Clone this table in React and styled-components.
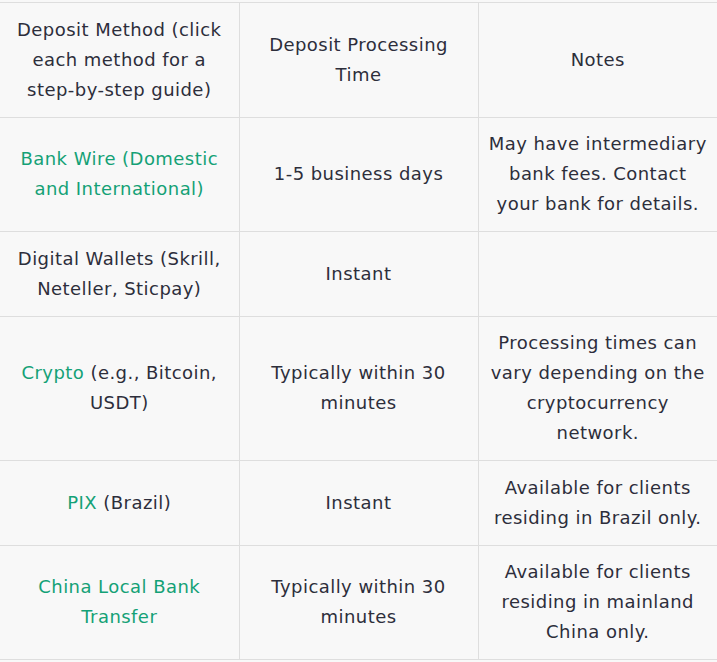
import React from 'react';
import styled, { createGlobalStyle } from 'styled-components';

const GlobalStyle = createGlobalStyle`
  html, body {
    margin: 0;
    padding: 0;
    background: #f8f8f8;
  }
`;

const Wrapper = styled.div`
  padding-top: 2px;
  width: 717px;
  background: #f8f8f8;
`;

const Table = styled.table`
  width: 100%;
  border-collapse: collapse;
  table-layout: fixed;
  font-family: 'DejaVu Sans', 'Liberation Sans', sans-serif;
  font-size: 18px;
  letter-spacing: 0.45px;
  line-height: 30px;
  color: #2d2e3b;
`;

const Cell = styled.td`
  border: 1px solid #dedede;
  padding: 11.75px 10px;
  text-align: center;
  vertical-align: middle;
  hyphens: manual;
  &:first-child {
    border-left: none;
  }
  &:last-child {
    border-right: none;
  }
`;

const HeadCell = styled(Cell).attrs({ as: 'th' })`
  font-weight: 400;
`;

const Link = styled.a`
  color: #14a176;
  text-decoration: none;
  cursor: pointer;
`;

const NoBreak = styled.span`
  white-space: nowrap;
`;

const rows = [
  {
    method: <Link>Bank Wire (Domestic and International)</Link>,
    time: '1-5 business days',
    notes: 'May have intermediary bank fees. Contact your bank for details.'
  },
  {
    method: 'Digital Wallets (Skrill, Neteller, Sticpay)',
    time: 'Instant',
    notes: ''
  },
  {
    method: (
      <>
        <Link>Crypto</Link> (e.g., Bitcoin, USDT)
      </>
    ),
    time: 'Typically within 30 minutes',
    notes: 'Processing times can vary depending on the cryptocurrency network.'
  },
  {
    method: (
      <>
        <Link>PIX</Link> (Brazil)
      </>
    ),
    time: 'Instant',
    notes: 'Available for clients residing in Brazil only.'
  },
  {
    method: <Link>China Local Bank Transfer</Link>,
    time: 'Typically within 30 minutes',
    notes: 'Available for clients residing in mainland China only.'
  }
];

const App = () => {
  return (
    <Wrapper>
      <GlobalStyle />
      <Table>
        <thead>
          <tr>
            <HeadCell>
              Deposit Method (click each method for a <NoBreak>step-by-step</NoBreak> guide)
            </HeadCell>
            <HeadCell>Deposit Processing Time</HeadCell>
            <HeadCell>Notes</HeadCell>
          </tr>
        </thead>
        <tbody>
          {rows.map((row, idx) => (
            <tr key={idx}>
              <Cell>{row.method}</Cell>
              <Cell>{row.time}</Cell>
              <Cell>{row.notes}</Cell>
            </tr>
          ))}
        </tbody>
      </Table>
    </Wrapper>
  );
};

export default App;
